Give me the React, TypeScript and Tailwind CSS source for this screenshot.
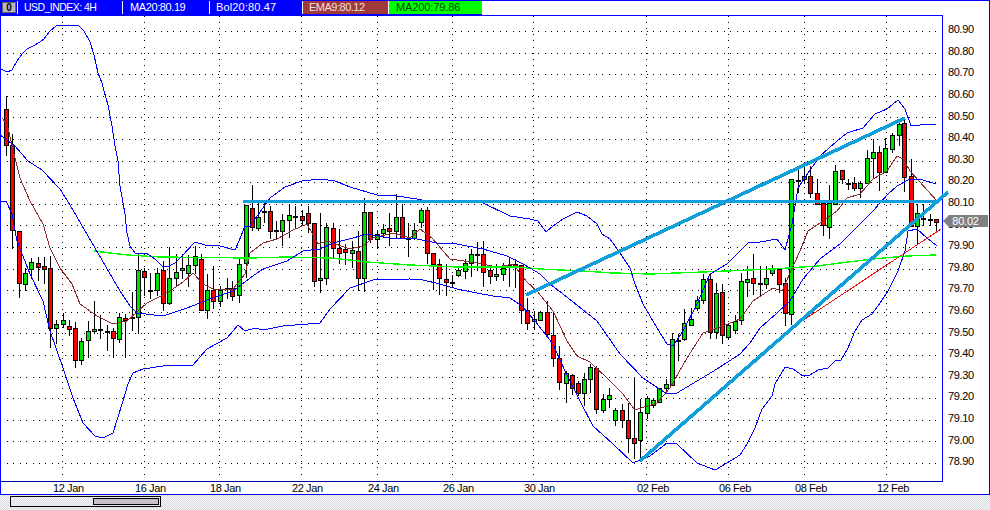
type C = [number, number, number, number, number, 'r' | 'g' | 'k'];

const candles: C[] = [
  [6,95,108,144,155,'r'],[12,133,144,229,248,'r'],[19,230,230,282,297,'r'],[25,267,272,283,290,'g'],
  [31,257,261,268,278,'g'],[38,256,262,266,280,'r'],[44,256,265,268,283,'r'],[50,255,267,327,347,'r'],
  [56,319,323,327,343,'g'],[63,312,319,323,327,'g'],[69,319,325,328,335,'r'],[75,321,327,359,367,'r'],
  [81,337,340,359,364,'g'],[88,320,330,339,357,'g'],[94,300,328,330,333,'g'],[100,314,328,329,338,'k'],
  [107,324,330,331,350,'k'],[113,327,330,337,357,'r'],[119,312,316,338,342,'g'],[125,313,317,319,357,'r'],
  [132,291,316,318,330,'k'],[138,253,269,316,333,'g'],[144,267,270,276,295,'r'],[150,272,289,290,298,'k'],
  [157,267,272,289,295,'g'],[163,260,269,302,310,'r'],[169,246,277,302,304,'g'],[176,253,271,277,285,'g'],
  [182,253,267,269,278,'g'],[188,254,264,272,286,'g'],[195,245,255,264,273,'g'],[201,253,258,309,310,'r'],
  [207,273,289,309,318,'g'],[213,265,289,300,308,'r'],[220,285,289,300,306,'g'],[227,277,287,289,298,'k'],
  [232,280,287,295,300,'r'],[239,257,263,294,302,'g'],[246,204,204,262,277,'g'],[252,184,207,226,230,'r'],
  [258,202,216,227,230,'g'],[264,202,210,211,222,'k'],[270,205,210,230,238,'r'],[276,220,229,230,239,'k'],
  [282,213,219,230,245,'g'],[289,204,214,219,237,'g'],[295,205,215,216,227,'k'],[302,209,215,219,225,'r'],
  [308,205,212,222,232,'r'],[314,222,222,280,286,'r'],[320,212,277,279,292,'g'],[326,222,226,277,284,'g'],
  [333,222,227,247,257,'r'],[339,228,247,252,263,'r'],[345,243,248,251,264,'r'],[352,240,249,252,267,'g'],
  [358,230,250,277,290,'r'],[364,197,211,277,291,'g'],[370,211,211,238,242,'r'],[377,230,233,238,248,'g'],
  [383,223,228,232,237,'g'],[389,212,227,230,245,'r'],[396,193,216,230,237,'g'],[402,203,216,237,238,'r'],
  [408,222,237,238,256,'k'],[414,222,229,237,239,'g'],[421,207,209,221,227,'g'],[427,206,209,252,263,'r'],
  [433,252,252,263,289,'r'],[439,258,263,277,294,'r'],[446,263,278,281,295,'r'],[452,274,281,282,286,'k'],
  [458,265,269,274,276,'g'],[465,258,262,270,278,'g'],[471,248,253,262,276,'g'],[477,241,253,254,270,'k'],
  [483,240,253,271,286,'r'],[490,265,269,275,283,'r'],[496,263,273,275,280,'g'],[503,262,267,273,280,'g'],
  [509,257,264,265,286,'r'],[515,258,263,265,287,'r'],[521,264,264,309,323,'r'],[527,297,309,322,329,'r'],
  [534,310,318,320,329,'g'],[540,310,311,319,320,'g'],[547,300,311,333,335,'r'],[553,312,334,357,366,'r'],
  [559,345,357,381,389,'r'],[566,370,372,382,402,'g'],[572,373,374,387,394,'r'],[578,380,382,392,395,'r'],
  [584,372,378,392,405,'g'],[590,363,366,378,392,'g'],[596,365,367,408,413,'r'],[603,393,398,409,412,'g'],
  [609,387,394,398,407,'g'],[615,407,409,419,425,'g'],[622,403,409,419,427,'r'],[628,402,419,437,452,'r'],
  [634,376,437,442,458,'r'],[640,398,411,439,458,'g'],[647,395,397,412,418,'g'],[653,397,399,404,407,'g'],
  [659,387,387,401,402,'g'],[666,378,383,387,393,'g'],[672,332,338,384,384,'g'],[678,333,339,340,360,'k'],
  [684,308,322,338,340,'g'],[691,307,318,324,325,'g'],[697,295,299,307,310,'g'],[703,273,278,299,303,'g'],
  [710,273,278,331,338,'r'],[716,282,292,331,338,'g'],[722,283,291,334,343,'r'],[728,322,324,336,339,'g'],
  [735,314,320,329,333,'g'],[741,272,280,319,324,'g'],[747,265,278,281,296,'g'],[753,253,277,282,294,'r'],
  [760,265,282,283,295,'k'],[766,265,277,283,288,'g'],[772,264,268,272,275,'g'],[779,268,268,283,292,'r'],
  [785,277,282,312,325,'r'],[791,178,178,313,324,'g'],[798,166,179,180,192,'k'],[804,165,175,178,183,'g'],
  [810,165,175,192,197,'r'],[817,178,192,203,203,'r'],[823,202,202,224,235,'r'],[829,184,202,226,238,'g'],
  [835,164,170,203,204,'g'],[842,169,169,178,183,'r'],[848,178,182,183,189,'k'],[854,176,182,187,190,'r'],
  [860,180,182,187,197,'g'],[867,149,157,182,182,'g'],[873,138,151,157,178,'g'],[879,145,151,171,190,'r'],
  [885,137,147,171,172,'g'],[892,132,134,148,152,'g'],[899,118,123,134,145,'g'],[904,118,122,176,191,'r'],
  [911,158,175,225,225,'r'],[917,203,212,225,243,'g'],[923,203,217,218,225,'k'],[930,213,218,219,225,'k'],
  [936,218,218,221,232,'r'],
];

const upper =
  '0,68 3,69 7,71 12,69 17,60 22,53 27,48 33,45 40,41 44,38 50,30 56,25 62,24 67,25 73,24 78,24 84,30 90,41 94,54 98,72 102,82 104,90 108,104 112,125 115,145 118,160 120,185 125,213 127,232 130,245 135,252 140,253 146,252 155,258 163,266 169,265 175,262 182,255 195,241 205,244 220,245 235,249 239,240 245,225 250,225 270,197 285,186 302,180 320,178 335,180 350,186 377,194 397,195 417,198 438,202 460,201 483,202 510,215 530,218 538,220 546,231 553,225 563,218 577,211 587,215 597,223 602,233 610,238 620,252 630,267 635,283 643,303 657,327 667,343 673,345 683,330 697,303 710,273 727,263 748,242 760,241 777,238 785,249 792,223 798,187 808,172 820,155 837,140 847,132 863,127 875,113 887,108 898,99 905,108 911,125 920,124 936,123';
const middle =
  '0,134 15,145 28,160 42,169 60,188 70,204 95,247 120,290 130,305 137,312 163,315 187,307 210,298 233,290 250,277 263,268 287,260 303,250 320,248 333,242 353,237 367,233 390,237 417,238 437,242 457,243 483,248 507,255 523,263 530,267 540,273 550,283 563,293 597,320 620,353 643,377 667,393 677,392 717,368 740,353 750,342 760,327 777,312 790,300 803,278 820,258 840,243 853,230 873,210 888,193 897,185 910,178 920,178 936,183';
const lower =
  '0,200 6,200 12,213 17,240 30,273 43,300 50,330 63,367 73,397 83,422 95,435 103,437 113,432 123,400 128,383 133,372 143,368 163,365 193,364 207,348 227,337 238,324 245,330 255,327 263,329 283,325 320,322 330,308 350,287 373,279 410,278 423,279 440,283 457,288 477,292 493,295 510,297 522,305 535,320 553,343 565,370 580,400 593,425 613,443 633,462 650,455 667,442 677,443 697,462 715,469 727,462 740,454 747,443 755,427 762,408 772,395 775,383 785,366 793,368 803,375 810,374 818,369 828,367 835,360 841,359 848,347 855,330 862,319 872,313 880,302 888,290 898,270 905,250 908,230 917,228 927,237 937,245';
const ema =
  '2,117 7,123 15,157 20,177 30,200 43,223 50,247 60,267 72,283 80,303 97,315 113,323 127,320 137,311 147,302 157,297 170,290 183,281 193,272 203,283 213,288 233,288 245,273 250,252 263,242 277,238 293,229 307,223 318,243 327,240 350,248 363,245 373,237 393,232 410,237 420,228 432,237 450,258 477,262 497,266 513,263 527,281 537,290 553,310 567,340 577,355 590,361 607,377 623,393 635,409 657,402 670,387 687,357 703,332 723,325 740,318 753,300 773,287 782,290 790,272 800,250 808,230 820,222 837,210 847,197 860,193 873,178 887,170 897,155 903,158 910,170 937,200';
const ma200 =
  '94,250 110,252 128,254 160,256 250,257 287,256 330,257 350,259 367,261 410,264 457,266 517,266 540,268 582,270 613,272 650,273 703,271 773,268 817,265 840,262 873,258 907,255 936,254';

const priceLabels = ['80.90','80.80','80.70','80.60','80.50','80.40','80.30','80.20','80.10','80.00','79.90','79.80','79.70','79.60','79.50','79.40','79.30','79.20','79.10','79.00','78.90'];
const gridRows = priceLabels.map((_, i) => Math.round(30 + 21.6 * i));
const gridCols = [62, 144, 219, 301, 377, 452, 533, 646, 728, 804, 886];
const dates: [string, string][] = [
  ['12 Jan','w-[82px]'],['16 Jan','w-[75px]'],['18 Jan','w-[82px]'],['22 Jan','w-[76px]'],['24 Jan','w-[75px]'],
  ['26 Jan','w-[81px]'],['30 Jan','w-[113px]'],['02 Feb','w-[82px]'],['06 Feb','w-[76px]'],['08 Feb','w-[82px]'],['12 Feb','w-[40px]'],
];
const font = "font-['Liberation_Sans',Arial,sans-serif]";
const dither = 'bg-[#e9e9ee] bg-[repeating-conic-gradient(#dcdce6_0%_25%,#f4f4f0_0%_50%)] bg-[length:2px_2px]';

function Chart() {
  return (
    <svg viewBox="1 15 941 466" width={941} height={466} className="block overflow-visible" shapeRendering="crispEdges">
      {gridRows.map((y) => (
        <line key={y} x1={7} x2={938} y1={y + 0.5} y2={y + 0.5} stroke="#000" strokeWidth={1} strokeDasharray="1 5.4" />
      ))}
      {gridCols.map((x) => (
        <line key={x} x1={x + 0.5} x2={x + 0.5} y1={15} y2={479} stroke="#000" strokeWidth={1} strokeDasharray="1 5.1" />
      ))}
      {candles.map(([x, hi, top, bot, lo, c]) => (
        <g key={x}>
          <rect x={x} y={hi} width={1} height={lo - hi} fill="#000" />
          {c === 'k' ? (
            <rect x={x - 2} y={top} width={5} height={Math.max(2, bot - top)} fill="#000" />
          ) : (
            <rect x={x - 1.5} y={top + 0.5} width={4} height={Math.max(1, bot - top)} fill={c === 'r' ? '#ff0000' : '#00e000'} stroke="#000" strokeWidth={1} />
          )}
        </g>
      ))}
      <polyline points={ema} fill="none" stroke="#8c2c2c" strokeWidth={1} />
      <polyline points={ma200} fill="none" stroke="#00ff00" strokeWidth={1.4} />
      <polyline points={upper} fill="none" stroke="#0000ff" strokeWidth={1} />
      <polyline points={middle} fill="none" stroke="#0000ff" strokeWidth={1} />
      <polyline points={lower} fill="none" stroke="#0000ff" strokeWidth={1} />
      <line x1={787} y1={330} x2={941} y2={228} stroke="#f01010" strokeWidth={1} />
      <line x1={243} y1={200.5} x2={937} y2={200.5} stroke="#119fdc" strokeWidth={3} />
      <line x1={526} y1={294} x2={905} y2={117} stroke="#119fdc" strokeWidth={3.6} />
      <line x1={640} y1={460} x2={948} y2={191} stroke="#119fdc" strokeWidth={3.6} />
    </svg>
  );
}

export default function App() {
  return (
    <div className={`relative flex h-[510px] w-[990px] flex-col overflow-hidden bg-white text-[11px] leading-none text-black ${font}`}>
      <header className="flex h-[15px] shrink-0 border-t border-r border-t-[#0000ff] border-r-[#0000ff]">
        <div className="flex h-[14px] w-[482px] items-stretch border-b border-[#0000ff] bg-[#0000ff] text-white">
          <div className="ml-[2px] mt-[1px] flex h-[11px] w-[14px] items-center justify-center border border-[#606060] bg-[#b8b8c0] text-[10px] font-bold text-black">0</div>
          <div className="ml-[1px] w-[1px] bg-white" />
          <div className="flex w-[104px] items-center pl-[6px] text-[10.5px] tracking-[-0.55px] whitespace-nowrap">USD_INDEX: 4H</div>
          <div className="w-[1px] bg-white" />
          <div className="flex w-[86px] items-center pl-[7px] tracking-[-0.4px] whitespace-nowrap">MA20:80.19</div>
          <div className="w-[1px] bg-white" />
          <div className="flex w-[92px] items-center pl-[6px] tracking-[0.15px] whitespace-nowrap">Bol20:80.47</div>
          <div className="w-[1px] bg-white" />
          <div className="flex w-[85px] items-center bg-[#a03a3a] pl-[6px] tracking-[-0.5px] whitespace-nowrap text-[#f0e0e0]">EMA9:80.12</div>
          <div className="w-[1px] bg-white" />
          <div className="flex flex-1 items-center bg-[#00ff00] pl-[7px] tracking-[-0.1px] whitespace-nowrap text-[#004000]">MA200:79.86</div>
        </div>
      </header>
      <main className="flex h-[467px] shrink-0 border-l border-r border-l-[#0000ff] border-r-[#0000ff]">
        <div className="h-[467px] w-[942px] shrink-0 border-t border-r border-b border-t-[#0000ff] border-r-[#0000ff] border-b-[#0000a0]">
          <Chart />
        </div>
        <div className="flex flex-1 flex-col pt-[4px] pl-[5px]">
          {priceLabels.map((p) => (
            <div key={p} className="flex h-[21.6px] shrink-0 items-center tracking-[-0.35px]">{p}</div>
          ))}
        </div>
      </main>
      <div className="flex h-[13px] shrink-0 items-center border-r border-l border-b border-[#0000ff] pl-[52px]">
        {dates.map(([d, w]) => (
          <div key={d} className={`${w} shrink-0 tracking-[-0.4px] whitespace-nowrap`}>{d}</div>
        ))}
      </div>
      <footer className={`flex flex-1 items-start pt-[1px] pl-[10px] ${dither}`}>
        <div className={`flex h-[11px] w-[151px] justify-end border border-black p-[1px] ${dither}`}>
          <div className="h-full w-[66px] border border-black bg-[#c8bfc8]" />
        </div>
      </footer>
      <div className="absolute top-[215px] left-[943px] flex h-[12px] w-[45px] items-center justify-center bg-[#808080] tracking-[-0.2px] text-white [clip-path:polygon(0_50%,6px_0,100%_0,100%_100%,6px_100%)]">80.02</div>
    </div>
  );
}
